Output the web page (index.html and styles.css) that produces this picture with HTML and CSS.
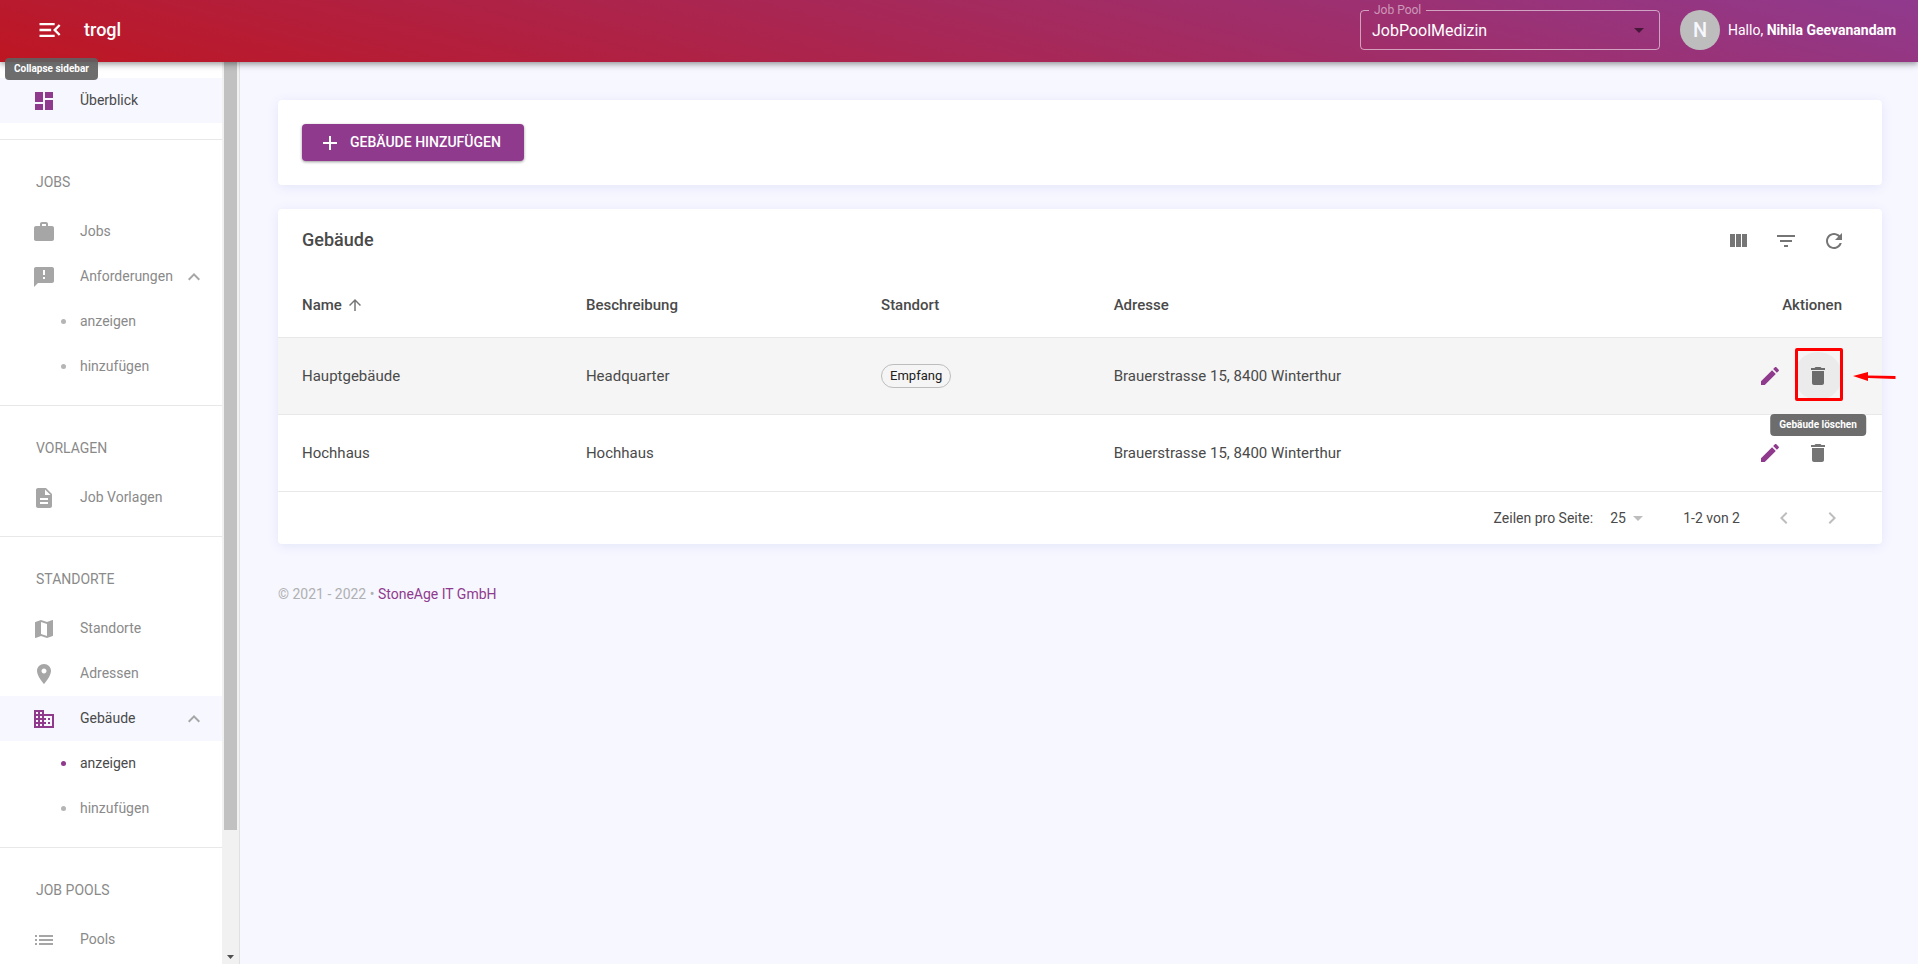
FILE: index.html
```html
<!DOCTYPE html>
<html lang="de">
<head>
<meta charset="utf-8">
<title>trogl – Gebäude</title>
<link rel="stylesheet" href="styles.css">
</head>
<body>
<svg class="defs" aria-hidden="true">
  <symbol id="i-menu" viewBox="0 0 24 24"><path d="M3 18h13v-2H3v2zm0-5h10v-2H3v2zm0-7v2h13V6H3zm18 9.59L17.42 12 21 8.41 19.59 7l-5 5 5 5L21 15.59z"/></symbol>
  <symbol id="i-dash" viewBox="0 0 24 24"><path d="M3 13h8V3H3v10zm0 8h8v-6H3v6zm10 0h8V11h-8v10zm0-18v6h8V3h-8z"/></symbol>
  <symbol id="i-work" viewBox="0 0 24 24"><path d="M20 6h-4V4c0-1.11-.89-2-2-2h-4c-1.11 0-2 .89-2 2v2H4c-1.11 0-1.99.89-1.99 2L2 19c0 1.11.89 2 2 2h16c1.11 0 2-.89 2-2V8c0-1.11-.89-2-2-2zm-6 0h-4V4h4v2z"/></symbol>
  <symbol id="i-feedback" viewBox="0 0 24 24"><path d="M20 2H4c-1.1 0-1.99.9-1.99 2L2 22l4-4h14c1.1 0 2-.9 2-2V4c0-1.1-.9-2-2-2zm-7 12h-2v-2h2v2zm0-4h-2V5h2v5z"/></symbol>
  <symbol id="i-doc" viewBox="0 0 24 24"><path d="M14 2H6c-1.1 0-1.99.9-1.99 2L4 20c0 1.1.89 2 1.99 2H18c1.1 0 2-.9 2-2V8l-6-6zm2 16H8v-2h8v2zm0-4H8v-2h8v2zm-3-5V3.5L18.5 9H13z"/></symbol>
  <symbol id="i-map" viewBox="0 0 24 24"><path d="M20.5 3l-.16.03L15 5.1 9 3 3.36 4.9c-.21.07-.36.25-.36.48V20.5c0 .28.22.5.5.5l.16-.03L9 18.9l6 2.1 5.64-1.9c.21-.07.36-.25.36-.48V3.500c0-.28-.22-.5-.5-.5zM15 19l-6-2.110V5l6 2.110V19z"/></symbol>
  <symbol id="i-place" viewBox="0 0 24 24"><path d="M12 2C8.130 2 5 5.130 5 9c0 5.250 7 13 7 13s7-7.750 7-13c0-3.870-3.130-7-7-7zm0 9.500c-1.380 0-2.500-1.120-2.500-2.500s1.120-2.500 2.500-2.500 2.500 1.120 2.500 2.500-1.120 2.500-2.500 2.500z"/></symbol>
  <symbol id="i-building" viewBox="0 0 24 24"><path d="M12 7V3H2v18h20V7H12zM6 19H4v-2h2v2zm0-4H4v-2h2v2zm0-4H4V9h2v2zm0-4H4V5h2v2zm4 12H8v-2h2v2zm0-4H8v-2h2v2zm0-4H8V9h2v2zm0-4H8V5h2v2zm10 12h-8v-2h2v-2h-2v-2h2v-2h-2V9h8v10zm-2-8h-2v2h2v-2zm0 4h-2v2h2v-2z"/></symbol>
  <symbol id="i-list" viewBox="0 0 24 24"><path d="M3 13h2v-2H3v2zm0 4h2v-2H3v2zm0-8h2V7H3v2zm4 4h14v-2H7v2zm0 4h14v-2H7v2zM7 7v2h14V7H7z"/></symbol>
  <symbol id="i-up" viewBox="0 0 24 24"><path d="M12 8l-6 6 1.410 1.410L12 10.830l4.590 4.580L18 14z"/></symbol>
  <symbol id="i-plus" viewBox="0 0 24 24"><path d="M19 13h-6v6h-2v-6H5v-2h6V5h2v6h6v2z"/></symbol>
  <symbol id="i-columns" viewBox="0 0 24 24"><path d="M4 5h5v13H4zM10 5h5v13h-5zM16 5h5v13h-5z"/></symbol>
  <symbol id="i-filter" viewBox="0 0 24 24"><path d="M10 18h4v-2h-4v2zM3 6v2h18V6H3zm3 7h12v-2H6v2z"/></symbol>
  <symbol id="i-refresh" viewBox="0 0 24 24"><path d="M17.650 6.350C16.200 4.900 14.210 4 12 4c-4.420 0-7.990 3.580-7.990 8s3.570 8 7.990 8c3.730 0 6.840-2.550 7.730-6h-2.080c-.82 2.330-3.040 4-5.650 4-3.310 0-6-2.690-6-6s2.690-6 6-6c1.660 0 3.140.69 4.220 1.780L13 11h7V4l-2.350 2.350z"/></symbol>
  <symbol id="i-sort" viewBox="0 0 24 24"><path d="M4 12l1.410 1.410L11 7.830V20h2V7.830l5.580 5.590L20 12l-8-8-8 8z"/></symbol>
  <symbol id="i-edit" viewBox="0 0 24 24"><path d="M3 17.250V21h3.750L17.810 9.940l-3.750-3.750L3 17.250zM20.710 7.040c.39-.39.39-1.020 0-1.410l-2.340-2.340c-.39-.39-1.020-.39-1.410 0l-1.830 1.830 3.750 3.750 1.830-1.830z"/></symbol>
  <symbol id="i-delete" viewBox="0 0 24 24"><path d="M6 19c0 1.100.9 2 2 2h8c1.100 0 2-.9 2-2V7H6v12zM19 4h-3.500l-1-1h-5l-1 1H5v2h14V4z"/></symbol>
  <symbol id="i-drop" viewBox="0 0 24 24"><path d="M7 10l5 5 5-5z"/></symbol>
  <symbol id="i-left" viewBox="0 0 24 24"><path d="M15.410 7.410L14 6l-6 6 6 6 1.410-1.410L10.830 12z"/></symbol>
  <symbol id="i-right" viewBox="0 0 24 24"><path d="M10 6L8.590 7.410 13.170 12l-4.580 4.590L10 18l6-6z"/></symbol>
</svg>

<header class="topbar">
  <div class="menu-wrap">
    <button class="icon-btn menu-btn" aria-label="Collapse sidebar"><svg class="icon icon-lg"><use href="#i-menu"/></svg></button>
    <span class="tooltip tooltip-menu" role="tooltip">Collapse sidebar</span>
  </div>
  <span class="brand">trogl</span>
  <fieldset class="pool">
    <legend><label for="pool">Job Pool</label></legend>
    <select id="pool"><option>JobPoolMedizin</option></select>
    <svg class="icon pool-arrow"><use href="#i-drop"/></svg>
  </fieldset>
  <span class="avatar">N</span>
  <span class="hello">Hallo, <b>Nihila Geevanandam</b></span>
</header>

<div class="layout">
  <aside class="sidebar">
    <nav class="nav">
      <section class="group">
        <a class="item active" href="#"><svg class="icon"><use href="#i-dash"/></svg><span>Überblick</span></a>
      </section>
      <section class="group">
        <h2>JOBS</h2>
        <a class="item" href="#"><svg class="icon"><use href="#i-work"/></svg><span>Jobs</span></a>
        <a class="item" href="#"><svg class="icon"><use href="#i-feedback"/></svg><span>Anforderungen</span><svg class="icon caret"><use href="#i-up"/></svg></a>
        <a class="item sub" href="#"><i class="dot"></i><span>anzeigen</span></a>
        <a class="item sub" href="#"><i class="dot"></i><span>hinzufügen</span></a>
      </section>
      <section class="group">
        <h2>VORLAGEN</h2>
        <a class="item" href="#"><svg class="icon"><use href="#i-doc"/></svg><span>Job Vorlagen</span></a>
      </section>
      <section class="group">
        <h2>STANDORTE</h2>
        <a class="item" href="#"><svg class="icon"><use href="#i-map"/></svg><span>Standorte</span></a>
        <a class="item" href="#"><svg class="icon"><use href="#i-place"/></svg><span>Adressen</span></a>
        <a class="item active" href="#"><svg class="icon"><use href="#i-building"/></svg><span>Gebäude</span><svg class="icon caret"><use href="#i-up"/></svg></a>
        <a class="item sub current" href="#"><i class="dot"></i><span>anzeigen</span></a>
        <a class="item sub" href="#"><i class="dot"></i><span>hinzufügen</span></a>
      </section>
      <section class="group">
        <h2>JOB POOLS</h2>
        <a class="item" href="#"><svg class="icon"><use href="#i-list"/></svg><span>Pools</span></a>
      </section>
    </nav>
    <div class="scrollbar" aria-hidden="true">
      <div class="track"><div class="thumb"></div></div>
      <svg class="scroll-arrow" viewBox="0 0 7 4"><path d="M0 0h7L3.500 4z"/></svg>
    </div>
  </aside>

  <main class="main">
    <section class="card actions-card">
      <button class="add-btn"><svg class="icon"><use href="#i-plus"/></svg><span>GEBÄUDE HINZUFÜGEN</span></button>
    </section>

    <section class="card">
      <div class="toolbar">
        <h1>Gebäude</h1>
        <button class="icon-btn" aria-label="Spalten"><svg class="icon"><use href="#i-columns"/></svg></button>
        <button class="icon-btn" aria-label="Filter"><svg class="icon"><use href="#i-filter"/></svg></button>
        <button class="icon-btn" aria-label="Aktualisieren"><svg class="icon"><use href="#i-refresh"/></svg></button>
      </div>
      <table class="grid">
        <colgroup><col class="c-name"><col class="c-desc"><col class="c-site"><col><col class="c-act"></colgroup>
        <thead>
          <tr><th><span class="sorted">Name <svg class="icon icon-sm"><use href="#i-sort"/></svg></span></th><th>Beschreibung</th><th>Standort</th><th>Adresse</th><th class="act-head">Aktionen</th></tr>
        </thead>
        <tbody>
          <tr class="hovered">
            <td>Hauptgebäude</td><td>Headquarter</td><td><span class="chip">Empfang</span></td><td>Brauerstrasse 15, 8400 Winterthur</td>
            <td class="act"><div class="act-row">
              <button class="icon-btn edit" aria-label="Bearbeiten"><svg class="icon"><use href="#i-edit"/></svg></button>
              <div class="marked">
                <button class="icon-btn is-hover" aria-label="Gebäude löschen"><svg class="icon"><use href="#i-delete"/></svg></button>
                <span class="frame"></span>
                <svg class="pointer" viewBox="0 0 44 12"><path d="M0 5L15 1V4.500L42.500 5V8L15 7V10z"/></svg>
                <span class="tooltip tooltip-delete" role="tooltip">Gebäude löschen</span>
              </div>
            </div></td>
          </tr>
          <tr>
            <td>Hochhaus</td><td>Hochhaus</td><td></td><td>Brauerstrasse 15, 8400 Winterthur</td>
            <td class="act"><div class="act-row">
              <button class="icon-btn edit" aria-label="Bearbeiten"><svg class="icon"><use href="#i-edit"/></svg></button>
              <button class="icon-btn" aria-label="Gebäude löschen"><svg class="icon"><use href="#i-delete"/></svg></button>
            </div></td>
          </tr>
        </tbody>
      </table>
      <div class="pager">
        <label for="rows">Zeilen pro Seite:</label>
        <span class="rows"><select id="rows"><option>25</option></select><svg class="icon"><use href="#i-drop"/></svg></span>
        <span class="range">1-2 von 2</span>
        <button class="icon-btn" aria-label="Vorherige Seite" disabled><svg class="icon"><use href="#i-left"/></svg></button>
        <button class="icon-btn" aria-label="Nächste Seite" disabled><svg class="icon"><use href="#i-right"/></svg></button>
      </div>
    </section>

    <footer class="foot">© 2021 - 2022 • <a href="#">StoneAge IT GmbH</a></footer>
  </main>
</div>
</body>
</html>
```
FILE: styles.css
```css
* { box-sizing: border-box; }

body {
  margin: 0;
  height: 100vh;
  display: flex;
  flex-direction: column;
  overflow: hidden;
  background: #f6f7ff;
  color: #4a4a4a;
  font: 14px/20px Roboto, "Liberation Sans", sans-serif;
}

button, select { font: inherit; color: inherit; }
a { text-decoration: none; color: inherit; }
.defs { position: absolute; width: 0; height: 0; }
.icon { width: 24px; height: 24px; flex: none; fill: currentColor; display: block; }
.icon-lg { width: 28px; height: 28px; }
.icon-sm { width: 18px; height: 18px; }

.icon-btn {
  width: 48px;
  height: 48px;
  flex: none;
  display: grid;
  place-items: center;
  padding: 0;
  border: 0;
  border-radius: 50%;
  background: none;
  color: #757575;
}

/* Top bar */
.topbar {
  position: relative;
  z-index: 2;
  flex: none;
  height: 62px;
  padding: 0 18px 2px 26px;
  display: flex;
  align-items: center;
  color: #fff;
  background: linear-gradient(15deg, #be1622, #903a8e);
  box-shadow: 0 2px 4px -1px rgba(0,0,0,.2), 0 4px 5px rgba(0,0,0,.14), 0 1px 10px rgba(0,0,0,.12);
}
.menu-wrap { position: relative; }
.menu-btn { color: #fff; }
.brand { margin-left: 10px; margin-right: auto; font-size: 18px; font-weight: 500; }

.pool {
  position: relative;
  width: 300px;
  height: 46px;
  margin: 0 20px 6px 0;
  padding: 0;
  border: 1px solid rgba(255,255,255,.55);
  border-radius: 4px;
}
.pool legend {
  margin-left: 8px;
  padding: 0 5px;
  font-size: 12px;
  line-height: 12px;
  color: rgba(255,255,255,.5);
}
.pool select {
  display: block;
  width: 100%;
  height: 30px;
  padding: 0 40px 0 11px;
  border: 0;
  background: none;
  appearance: none;
  font-size: 16px;
}
.pool option { color: #333; }
.pool-arrow { position: absolute; right: 8px; top: 2px; color: rgba(0,0,0,.54); pointer-events: none; }

.avatar {
  width: 40px;
  height: 40px;
  margin-right: 8px;
  display: grid;
  place-items: center;
  border-radius: 50%;
  background: #bdbdbd;
  color: #f6f7ff;
  font-size: 20px;
  font-weight: 500;
}
.hello { min-width: 172px; }

.tooltip {
  position: absolute;
  z-index: 3;
  padding: 4px 9px;
  border-radius: 4px;
  background: rgba(97,97,97,.92);
  color: #fff;
  font-size: 10px;
  font-weight: 700;
  line-height: 14px;
  white-space: nowrap;
}
.tooltip-menu { top: 52px; left: -21px; }
.tooltip-delete { top: 62px; left: 50%; transform: translateX(-50%); }

/* Sidebar */
.layout { flex: 1; min-height: 0; display: flex; }
.sidebar {
  flex: none;
  width: 240px;
  display: flex;
  overflow: hidden;
  background: #fff;
  border-right: 1px solid #e0e0e0;
}
.nav { flex: 1; min-width: 0; padding-top: 16px; }
.group { padding-bottom: 16px; border-bottom: 1px solid #e8e8e8; }
.group:last-child { border-bottom: 0; }
.group h2 {
  margin: 0;
  padding: 32px 0 17px 36px;
  font-size: 14px;
  font-weight: 400;
  line-height: 20px;
  color: #8a8a8a;
}
.item {
  height: 45px;
  padding: 0 16px 0 32px;
  display: flex;
  align-items: center;
  color: #8a8a8a;
}
.item .icon { color: #a6a6a6; }
.item > span { flex: 1; margin-left: 24px; padding-bottom: 2px; }
.item.active { background: #f6f7ff; }
.item.active, .item.current { color: #4a4a4a; }
.item.active .icon:first-child { color: #903a8e; }
.sub { padding-left: 61px; }
.item.sub > span { margin-left: 14px; }
.dot { width: 5px; height: 5px; border-radius: 50%; background: #b5b5b5; }
.current .dot { background: #903a8e; }

.scrollbar {
  flex: none;
  width: 17px;
  padding: 0 2px 5px;
  display: flex;
  flex-direction: column;
  align-items: center;
  background: #f1f1f1;
}
.track { flex: 1; width: 13px; }
.thumb { height: 86%; background: #c1c1c1; }
.scroll-arrow { width: 7px; height: 4px; fill: #505050; }

/* Content */
.main { flex: 1; min-width: 0; padding: 38px 36px 0 38px; }
.card {
  margin-bottom: 24px;
  border-radius: 4px;
  background: #fff;
  box-shadow: 0 2px 12px rgba(75,75,200,.1);
}
.actions-card { padding: 24px; }
.add-btn {
  height: 37px;
  min-width: 222px;
  padding: 0 16px;
  display: flex;
  align-items: center;
  gap: 8px;
  border: 0;
  border-radius: 4px;
  background: #903a8e;
  color: #fff;
  font-weight: 500;
  box-shadow: 0 1px 3px rgba(0,0,0,.4);
}
.add-btn span { padding-bottom: 2px; }

.toolbar { height: 64px; padding: 0 24px; display: flex; align-items: center; }
.toolbar h1 { flex: 1; margin: 0; padding-bottom: 2px; font-size: 18px; font-weight: 500; }

.grid { width: 100%; table-layout: fixed; border-collapse: collapse; font-size: 15px; }
.c-name { width: 18.2%; }
.c-desc { width: 18.4%; }
.c-site { width: 14.500%; }
.c-act { width: 160px; }
.grid th, .grid td { padding: 0 16px; border-bottom: 1px solid #e8e8e8; text-align: left; }
.grid th { height: 64px; font-weight: 500; }
.grid td { height: 77px; }
.grid th:first-child, .grid td:first-child { padding-left: 24px; }
.grid .act-head { padding-right: 40px; text-align: right; }
.grid .act { padding-right: 40px; }
.hovered { background: #f5f5f5; }
.sorted { display: flex; align-items: center; gap: 4px; }
.sorted .icon { color: #757575; }

.chip {
  display: inline-block;
  padding: 0 8px;
  border: 1px solid #bdbdbd;
  border-radius: 12px;
  color: #212121;
  font-size: 13px;
  line-height: 22px;
}
.act-row { display: flex; justify-content: flex-end; }
.grid .edit { color: #903a8e; }
.marked { position: relative; }
.is-hover { background: #ebebeb; color: #6b6b6b; }
.frame { position: absolute; inset: -4px -1px -1px 1px; border: 3px solid #f00; border-radius: 2px; }
.pointer { position: absolute; left: 59px; top: 19px; width: 44px; height: 12px; fill: #f00; }

.pager { height: 52px; padding: 0 26px; display: flex; align-items: center; justify-content: flex-end; }
.rows { margin-left: 17px; display: flex; align-items: center; }
.rows select { width: 16px; padding: 0; border: 0; background: none; appearance: none; }
.rows .icon { color: #bdbdbd; }
.range { margin: 0 20px 0 33px; }
.pager .icon-btn { color: #bdbdbd; }

.foot { padding-top: 16px; color: #b0b0b0; }
.foot a { color: #903a8e; }
```
